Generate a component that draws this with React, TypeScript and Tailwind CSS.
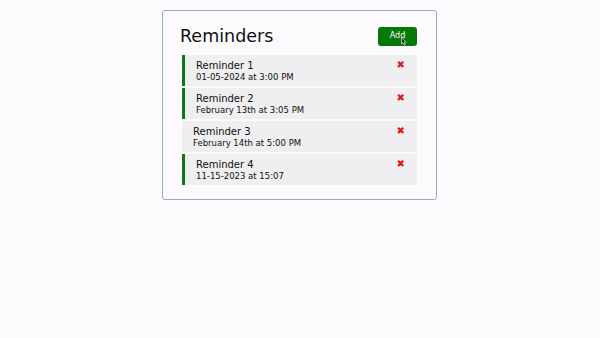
import React from 'react';

const reminders = [
  { id: 1, text: 'Reminder 1', day: '01-05-2024 at 3:00 PM', reminder: true },
  { id: 2, text: 'Reminder 2', day: 'February 13th at 3:05 PM', reminder: true },
  { id: 3, text: 'Reminder 3', day: 'February 14th at 5:00 PM', reminder: false },
  { id: 4, text: 'Reminder 4', day: '11-15-2023 at 15:07', reminder: true },
];

export default function App() {
  return (
    <div className="min-h-screen w-full bg-[#fcfafd] pt-[10px]" style={{ fontFamily: '"DejaVu Sans", "Open Sans", sans-serif' }}>
      <div className="ml-[162px] w-[275px] h-[190px] border border-[#8fb0c6] rounded-[3px] px-[19px] pt-[14px]">
        <header className="flex items-center justify-between mb-[8px]">
          <h1 className="text-[17.5px] leading-[22px] text-[#111] -ml-[2px]">Reminders</h1>
          <button className="relative bg-[#037a07] text-white text-[8px] rounded-[3px] w-[39px] h-[19px] flex items-center justify-center">
            Add
            <svg className="absolute left-[23px] top-[10px]" width="7" height="9" viewBox="0 0 7 9">
              <path d="M0.5 0.5 L0.5 7 L2 5.6 L3.2 8.3 L4.3 7.8 L3.1 5.2 L5.2 5.2 Z" fill="#222" stroke="#fff" strokeWidth="0.6" />
            </svg>
          </button>
        </header>
        <div className="flex flex-col gap-[2px]">
          {reminders.map(r => (
            <div
              key={r.id}
              className={`flex justify-between bg-[#efeef0] h-[31px] pr-[12px] pl-[11px] ${r.reminder ? 'border-l-[3px] border-[#0b7a12]' : ''}`}
            >
              <div className="flex flex-col pt-[4px]">
                <span className="text-[10px] leading-[13px] text-[#111]">{r.text}</span>
                <span className="text-[8.5px] leading-[11px] text-[#111]">{r.day}</span>
              </div>
              <span className="text-[#e0161b] text-[10px] font-bold leading-none pt-[5px]">✖</span>
            </div>
          ))}
        </div>
      </div>
    </div>
  );
}
